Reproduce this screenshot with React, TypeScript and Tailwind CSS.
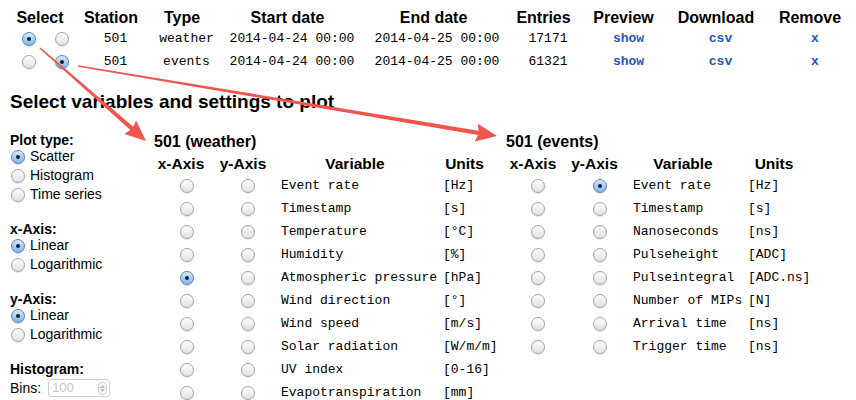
import React from "react";

const SANS = "font-['Liberation_Sans',Arial,Helvetica,sans-serif]";
const MONO = "font-['Liberation_Mono','Courier_New',monospace]";

function Radio({ checked }: { checked?: boolean }) {
  if (checked) {
    return (
      <span className="inline-flex shrink-0 items-center justify-center w-[14px] h-[14px] rounded-full border border-[#5a83b3] bg-[linear-gradient(#d6e8fb,#80b5ee)] shadow-[0_1px_1px_rgba(0,0,0,0.15)]">
        <span className="w-[4px] h-[4px] rounded-full bg-[#17202c]" />
      </span>
    );
  }
  return (
    <span className="inline-block shrink-0 w-[14px] h-[14px] rounded-full border border-[#a3a3a3] bg-[linear-gradient(#ffffff,#e0e0e0)] shadow-[0_1px_1px_rgba(0,0,0,0.1)]" />
  );
}

const topCols = "grid grid-cols-[64px_78px_64px_147px_145px_75px_85px_100px_88px] pl-[8px]";

const topRows = [
  { sel: 0, type: "weather", entries: "17171" },
  { sel: 1, type: "events", entries: "61321" },
];

const weather: [string, string][] = [
  ["Event rate", "[Hz]"],
  ["Timestamp", "[s]"],
  ["Temperature", "[°C]"],
  ["Humidity", "[%]"],
  ["Atmospheric pressure", "[hPa]"],
  ["Wind direction", "[°]"],
  ["Wind speed", "[m/s]"],
  ["Solar radiation", "[W/m/m]"],
  ["UV index", "[0-16]"],
  ["Evapotranspiration", "[mm]"],
];

const events: [string, string][] = [
  ["Event rate", "[Hz]"],
  ["Timestamp", "[s]"],
  ["Nanoseconds", "[ns]"],
  ["Pulseheight", "[ADC]"],
  ["Pulseintegral", "[ADC.ns]"],
  ["Number of MIPs", "[N]"],
  ["Arrival time", "[ns]"],
  ["Trigger time", "[ns]"],
];

function arrowPoints(x1: number, y1: number, x2: number, y2: number) {
  const dx = x2 - x1;
  const dy = y2 - y1;
  const len = Math.sqrt(dx * dx + dy * dy);
  const ux = dx / len;
  const uy = dy / len;
  const px = -uy;
  const py = ux;
  const headLen = 19;
  const headHalf = 9;
  const tw = 0.8;
  const sw = 2.2;
  const bx = x2 - ux * headLen;
  const by = y2 - uy * headLen;
  const pts = [
    [x1 + px * tw, y1 + py * tw],
    [bx + px * sw, by + py * sw],
    [bx - ux * 2 + px * headHalf, by - uy * 2 + py * headHalf],
    [x2, y2],
    [bx - ux * 2 - px * headHalf, by - uy * 2 - py * headHalf],
    [bx - px * sw, by - py * sw],
    [x1 - px * tw, y1 - py * tw],
  ];
  return pts.map((p) => `${p[0].toFixed(1)},${p[1].toFixed(1)}`).join(" ");
}

function Option({ label, checked }: { label: string; checked?: boolean }) {
  return (
    <div className="flex items-center h-[19px] pl-[1px] gap-[5px] text-[14px]">
      <Radio checked={checked} />
      <span>{label}</span>
    </div>
  );
}

function VarTable({
  title,
  rows,
  cols,
  xChecked,
  yChecked,
  hdrPad,
  dataPad,
}: {
  title: string;
  rows: [string, string][];
  cols: string;
  xChecked: number;
  yChecked: number;
  hdrPad: string[];
  dataPad: string[];
}) {
  return (
    <div>
      <div className="h-[21px] flex items-center text-[16px] font-bold">{title}</div>
      <div className={`${cols} h-[20px] text-[15.5px] font-bold`}>
        <div className={`flex items-center justify-center ${hdrPad[0]}`}>x-Axis</div>
        <div className={`flex items-center justify-center ${hdrPad[1]}`}>y-Axis</div>
        <div className={`flex items-center justify-center ${hdrPad[2]}`}>Variable</div>
        <div className={`flex items-center justify-center ${hdrPad[3]}`}>Units</div>
      </div>
      <div className="mt-[2px]">
        {rows.map(([v, u], i) => (
          <div key={i} className={`${cols} h-[23px]`}>
            <div className={`flex items-center justify-center ${dataPad[0]}`}>
              <Radio checked={i === xChecked} />
            </div>
            <div className={`flex items-center justify-center ${dataPad[1]}`}>
              <Radio checked={i === yChecked} />
            </div>
            <div className={`flex items-center ${dataPad[2]} ${MONO} text-[13px] whitespace-pre`}>{v}</div>
            <div className={`flex items-center ${dataPad[3]} ${MONO} text-[13px] whitespace-pre`}>{u}</div>
          </div>
        ))}
      </div>
    </div>
  );
}

export default function App() {
  return (
    <div className={`relative w-[856px] h-[400px] overflow-hidden bg-white text-black ${SANS}`}>
      {/* Top table */}
      <div className="pt-[6px]">
        <div className={`${topCols} h-[20px] text-[16px] font-bold`}>
          {["Select", "Station", "Type", "Start date", "End date", "Entries", "Preview", "Download", "Remove"].map((h) => (
            <div key={h} className="flex items-center justify-center whitespace-nowrap">
              {h}
            </div>
          ))}
        </div>
        <div className="mt-[2px]">
          {topRows.map((r, i) => (
            <div key={i} className={`${topCols} ${i === 0 ? "h-[22px]" : "h-[23px]"} ${MONO} text-[13px]`}>
              <div className="flex items-center pl-[14px] gap-[19px]">
                <Radio checked={r.sel === 0} />
                <Radio checked={r.sel === 1} />
              </div>
              <div className="flex items-center justify-center pl-[9px]">501</div>
              <div className="flex items-center justify-center pl-[9px]">{r.type}</div>
              <div className="flex items-center justify-center pl-[9px] whitespace-pre">2014-04-24 00:00</div>
              <div className="flex items-center justify-center pl-[7px] whitespace-pre">2014-04-25 00:00</div>
              <div className="flex items-center justify-center pl-[9px]">{r.entries}</div>
              <div className="flex items-center justify-center pl-[10px] font-bold text-[#2158b5]">show</div>
              <div className="flex items-center justify-center pl-[9px] font-bold text-[#2158b5]">csv</div>
              <div className="flex items-center justify-center pl-[10px] font-bold text-[#2158b5]">x</div>
            </div>
          ))}
        </div>
      </div>

      {/* Title */}
      <div className="mt-[18px] pl-[10px] h-[22px] flex items-center text-[19px] font-bold">
        Select variables and settings to plot
      </div>

      {/* Lower section */}
      <div className="mt-[18px] flex pl-[10px]">
        {/* Left panel */}
        <div className="w-[144px] pt-[2px]">
          <div className="h-[14px] flex items-center text-[14px] font-bold">Plot type:</div>
          <Option label="Scatter" checked />
          <Option label="Histogram" />
          <Option label="Time series" />

          <div className="mt-[18px] h-[14px] flex items-center text-[14px] font-bold">x-Axis:</div>
          <Option label="Linear" checked />
          <Option label="Logarithmic" />

          <div className="mt-[18px] h-[14px] flex items-center text-[14px] font-bold">y-Axis:</div>
          <Option label="Linear" checked />
          <Option label="Logarithmic" />

          <div className="mt-[18px] h-[14px] flex items-center text-[14px] font-bold">Histogram:</div>
          <div className="h-[24px] flex items-center text-[14px]">
            <span>Bins:</span>
            <div className="ml-[7px] w-[62px] h-[18px] border border-[#cfcfcf] rounded-[3px] flex items-center justify-between pl-[3px] pr-[2px]">
              <span className="text-[13px] text-[#c6c6c6]">100</span>
              <span className="w-[9px] h-[13px] border border-[#c9c9c9] rounded-[4px] flex flex-col items-center justify-center gap-[1px]">
                <svg width="5" height="3" viewBox="0 0 5 3">
                  <path d="M0 3 L2.5 0 L5 3 Z" fill="#b5b5b5" />
                </svg>
                <svg width="5" height="3" viewBox="0 0 5 3">
                  <path d="M0 0 L2.5 3 L5 0 Z" fill="#b5b5b5" />
                </svg>
              </span>
            </div>
          </div>
        </div>

        {/* Weather */}
        <div className="w-[346px]">
          <VarTable
            title="501 (weather)"
            rows={weather}
            cols="grid grid-cols-[54px_70px_162px_60px]"
            xChecked={4}
            yChecked={-1}
            hdrPad={["", "", "pr-[8px]", "pr-[11px]"]}
            dataPad={["pl-[11px]", "pl-[10px]", "pl-[3px]", "pl-[3px]"]}
          />
        </div>

        {/* Events */}
        <div className="ml-[6px]">
          <VarTable
            title="501 (events)"
            rows={events}
            cols="grid grid-cols-[54px_69px_115px_60px]"
            xChecked={-1}
            yChecked={0}
            hdrPad={["", "", "pr-[7px]", ""]}
            dataPad={["pl-[9px]", "pl-[11px]", "pl-[4px]", "pl-[4px]"]}
          />
        </div>
      </div>

      {/* Annotation arrows */}
      <svg className="absolute left-0 top-0 pointer-events-none" width="856" height="400" viewBox="0 0 856 400">
        <polygon points={arrowPoints(40, 48, 146, 141)} fill="#f0554d" />
        <polygon points={arrowPoints(78, 66, 497, 136)} fill="#f0554d" />
      </svg>
    </div>
  );
}
